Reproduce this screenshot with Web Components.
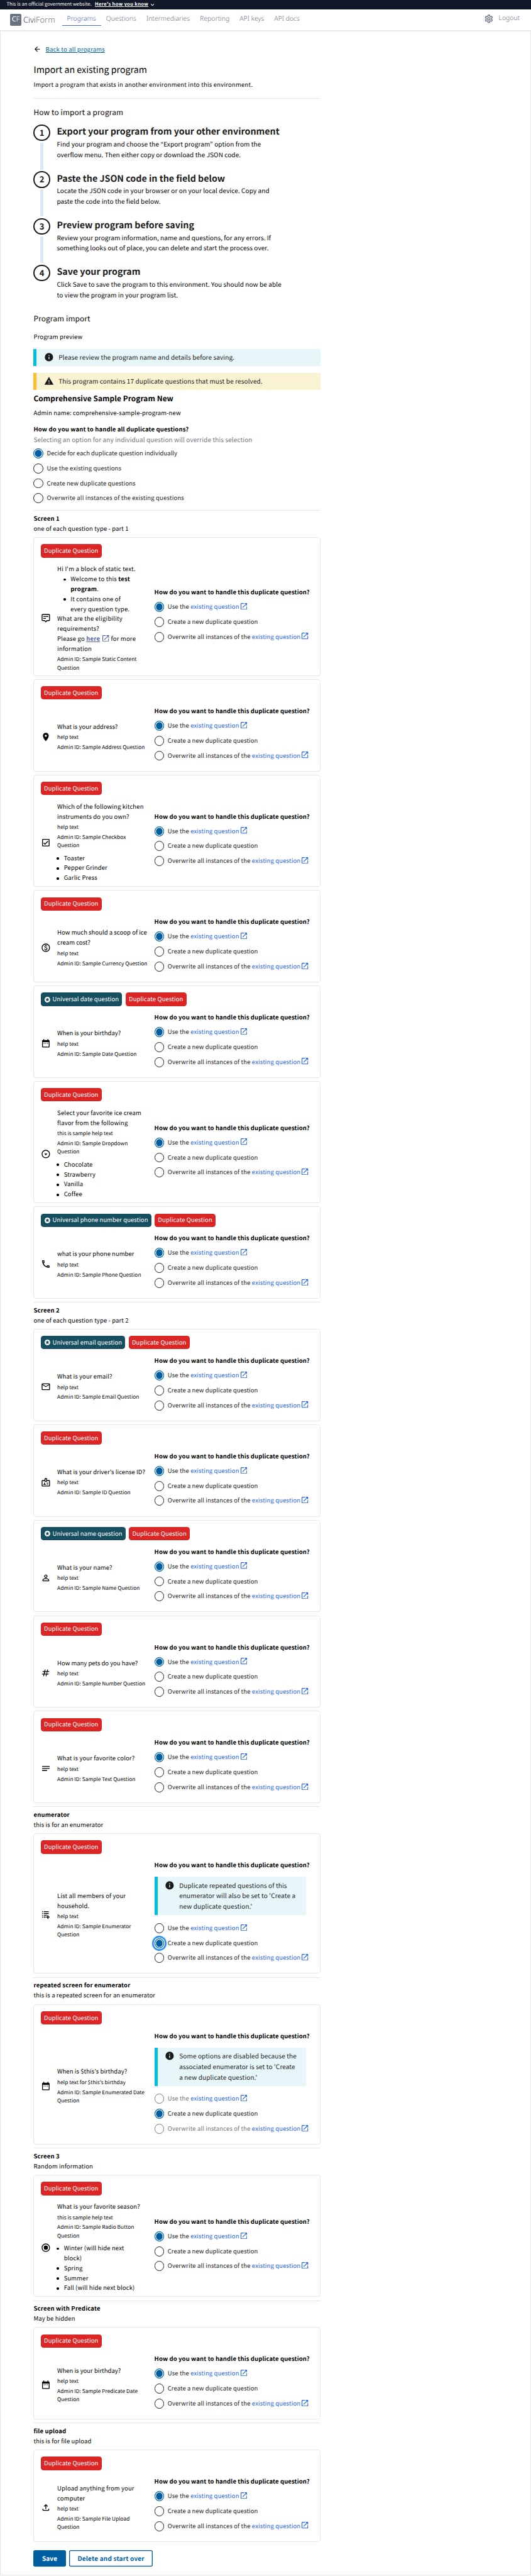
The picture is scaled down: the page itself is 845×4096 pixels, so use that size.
<!DOCTYPE html>
<html lang="en">
<head>
<meta charset="utf-8">
<title>Import an existing program</title>
<style>
html,body{margin:0;padding:0;background:#fff}
body{overflow:hidden;height:4096px}
import-page{zoom:.6602;width:1279.8px;text-rendering:geometricPrecision;font-family:"Noto Sans CJK JP","Noto Sans",sans-serif;font-size:14.45px;line-height:24px;letter-spacing:.19px;color:#000}
</style>
</head>
<body>
<import-page></import-page>
<script>
const define = (name, html, setup) => {
  const tpl = document.createElement('template');
  tpl.innerHTML = html;
  customElements.define(name, class extends HTMLElement {
    connectedCallback() {
      if (this.shadowRoot) return;
      const root = this.attachShadow({ mode: 'open' });
      // Queued before the children connect, so a parent configures them first.
      if (setup) queueMicrotask(() => setup(this, root));
      root.append(tpl.content.cloneNode(true));
    }
  });
};

const ICONS = {
  open: '<path d="M19 19H5V5h7V3H5a2 2 0 0 0-2 2v14a2 2 0 0 0 2 2h14c1.1 0 2-.9 2-2v-7h-2v7zM14 3v2h3.59l-9.83 9.83 1.41 1.41L19 6.41V10h2V3h-7z"/>',
  back: '<path d="M20 11H7.83l5.59-5.59L12 4l-8 8 8 8 1.41-1.41L7.83 13H20v-2z"/>',
  info: '<path d="M12 2a10 10 0 1 0 0 20 10 10 0 0 0 0-20zm1 15h-2v-6h2v6zm0-8h-2V7h2v2z"/>',
  warning: '<path d="M1 21h22L12 2 1 21zm12-3h-2v-2h2v2zm0-4h-2v-4h2v4z"/>',
  gear: '<path d="M19.43 12.98c.04-.32.07-.64.07-.98 0-.34-.03-.66-.07-.98l2.11-1.65c.19-.15.24-.42.12-.64l-2-3.46a.5.5 0 0 0-.61-.22l-2.49 1c-.52-.4-1.08-.73-1.69-.98l-.38-2.65A.488.488 0 0 0 14 2h-4c-.25 0-.46.18-.49.42l-.38 2.65c-.61.25-1.17.59-1.69.98l-2.49-1a.566.566 0 0 0-.18-.03c-.17 0-.34.09-.43.25l-2 3.46c-.13.22-.07.49.12.64l2.11 1.65c-.04.32-.07.65-.07.98 0 .33.03.66.07.98l-2.11 1.65c-.19.15-.24.42-.12.64l2 3.46a.5.5 0 0 0 .61.22l2.49-1c.52.4 1.08.73 1.69.98l.38 2.65c.03.24.24.42.49.42h4c.25 0 .46-.18.49-.42l.38-2.65c.61-.25 1.17-.59 1.69-.98l2.49 1c.06.02.12.03.18.03.17 0 .34-.09.43-.25l2-3.46c.12-.22.07-.49-.12-.64l-2.11-1.65zm-1.98-1.71c.04.31.05.52.05.73 0 .21-.02.43-.05.73l-.14 1.13.89.7 1.08.84-.7 1.21-1.27-.51-1.04-.42-.9.68c-.43.32-.84.56-1.25.73l-1.06.43-.16 1.13-.2 1.35h-1.4l-.19-1.35-.16-1.13-1.06-.43c-.43-.18-.83-.41-1.23-.71l-.91-.7-1.06.43-1.27.51-.7-1.21 1.08-.84.89-.7-.14-1.13c-.03-.31-.05-.54-.05-.74s.02-.43.05-.73l.14-1.13-.89-.7-1.08-.84.7-1.21 1.27.51 1.04.42.9-.68c.43-.32.84-.56 1.25-.73l1.06-.43.16-1.13.2-1.35h1.39l.19 1.35.16 1.13 1.06.43c.43.18.83.41 1.23.71l.91.7 1.06-.43 1.27-.51.7 1.21-1.07.85-.89.7.14 1.13z"/><circle cx="12" cy="12" r="3" fill="none" stroke="currentColor" stroke-width="2"/>',
  chevron: '<path d="M6 9l6 6 6-6" fill="none" stroke="currentColor" stroke-width="2.6"/>',
  static: '<path d="M4.5 3h15A1.5 1.5 0 0 1 21 4.5v11.8a1.5 1.5 0 0 1-1.5 1.5H15l-3 3-3-3H4.5A1.5 1.5 0 0 1 3 16.3V4.5A1.5 1.5 0 0 1 4.5 3z" fill="none" stroke="currentColor" stroke-width="2"/><path d="M5.8 7.2h12.4v2H5.8zM5.8 11.6h6.4v2H5.8z"/>',
  place: '<path d="M12 2C8.13 2 5 5.13 5 9c0 5.25 7 13 7 13s7-7.75 7-13c0-3.87-3.13-7-7-7zm0 9.5a2.5 2.5 0 0 1 0-5 2.5 2.5 0 0 1 0 5z"/>',
  check: '<path d="M19 3H5c-1.1 0-2 .9-2 2v14c0 1.1.9 2 2 2h14c1.1 0 2-.9 2-2V5c0-1.1-.9-2-2-2zm0 16H5V5h14v14zM17.99 9l-1.41-1.42-6.59 6.59-2.58-2.57-1.42 1.41 4 3.99z"/>',
  paid: '<path d="M12 2C6.48 2 2 6.48 2 12s4.48 10 10 10 10-4.48 10-10S17.52 2 12 2zm0 18c-4.41 0-8-3.59-8-8s3.59-8 8-8 8 3.59 8 8-3.59 8-8 8zm.89-8.9c-1.78-.59-2.64-.96-2.64-1.9 0-1.02 1.11-1.39 1.81-1.39 1.31 0 1.79.99 1.9 1.34l1.58-.67c-.15-.44-.82-1.91-2.66-2.23V5h-1.75v1.26c-2.6.56-2.62 2.85-2.62 2.96 0 2.27 2.25 2.91 3.35 3.31 1.58.56 2.28 1.07 2.28 2.03 0 1.13-1.05 1.61-1.98 1.61-1.82 0-2.34-1.87-2.4-2.09l-1.66.67c.63 2.19 2.28 2.78 3.02 2.96V19h1.75v-1.24c.52-.09 3.02-.59 3.02-3.22.01-1.39-.6-2.61-3-3.44z"/>',
  date: '<path d="M7 11h2v2H7zM11 11h2v2h-2zM15 11h2v2h-2z"/><path d="M19 4h-1V2h-2v2H8V2H6v2H5c-1.11 0-1.99.9-1.99 2L3 20a2 2 0 0 0 2 2h14c1.1 0 2-.9 2-2V6c0-1.1-.9-2-2-2zm0 16H5V9h14v11z"/>',
  star: '<path d="M11.99 2C6.47 2 2 6.48 2 12s4.47 10 9.99 10C17.52 22 22 17.52 22 12S17.52 2 11.99 2zm4.24 16L12 15.45 7.77 18l1.12-4.81-3.73-3.23 4.92-.42L12 5l1.92 4.53 4.92.42-3.73 3.23L16.23 18z"/>',
  dropdown: '<path d="M12 4c4.41 0 8 3.59 8 8s-3.59 8-8 8-8-3.59-8-8 3.59-8 8-8m0-2C6.48 2 2 6.48 2 12s4.48 10 10 10 10-4.48 10-10S17.52 2 12 2zm0 13l-4-4h8z"/>',
  phone: '<path d="M6.54 5c.06.89.21 1.76.45 2.59l-1.2 1.2c-.41-1.2-.67-2.47-.76-3.79h1.51m9.86 12.02c.85.24 1.72.39 2.6.45v1.49c-1.32-.09-2.59-.35-3.8-.75l1.2-1.19M7.5 3H4c-.55 0-1 .45-1 1 0 9.39 7.61 17 17 17 .55 0 1-.45 1-1v-3.49c0-.55-.45-1-1-1-1.24 0-2.45-.2-3.57-.57a.84.84 0 0 0-.31-.05c-.26 0-.51.1-.71.29l-2.2 2.2a15.149 15.149 0 0 1-6.59-6.59l2.2-2.2c.28-.28.36-.67.25-1.02A11.36 11.36 0 0 1 8.5 4c0-.55-.45-1-1-1z"/>',
  email: '<path d="M22 6c0-1.1-.9-2-2-2H4c-1.1 0-2 .9-2 2v12c0 1.1.9 2 2 2h16c1.1 0 2-.9 2-2V6zm-2 0l-8 5-8-5h16zm0 12H4V8l8 5 8-5v10z"/>',
  id: '<path d="M20 7h-5V4c0-1.1-.9-2-2-2h-2c-1.1 0-2 .9-2 2v3H4c-1.1 0-2 .9-2 2v11c0 1.1.9 2 2 2h16c1.1 0 2-.9 2-2V9c0-1.1-.9-2-2-2zm-9-3h2v5h-2V4zm9 16H4V9h5c0 1.1.9 2 2 2h2c1.1 0 2-.9 2-2h5v11z"/><circle cx="9" cy="14.5" r="1.5"/><path d="M11.08 16.18a5.3 5.3 0 0 0-4.16 0c-.56.24-.92.78-.92 1.39V18h6v-.43c0-.61-.36-1.15-.92-1.39zM14 13h4v1.5h-4zM14 16h4v1.5h-4z"/>',
  person: '<path d="M12 5.9a2.1 2.1 0 1 1 0 4.2 2.1 2.1 0 0 1 0-4.2m0 9c2.97 0 6.1 1.46 6.1 2.1v1.1H5.9V17c0-.64 3.13-2.1 6.1-2.1M12 4C9.79 4 8 5.79 8 8s1.79 4 4 4 4-1.79 4-4-1.79-4-4-4zm0 9c-2.67 0-8 1.34-8 4v3h16v-3c0-2.66-5.33-4-8-4z"/>',
  number: '<path d="M20 10l.5-2h-4l1-4h-2l-1 4h-4l1-4h-2l-1 4h-4L4 10h4l-1 4H3l-.5 2h4l-1 4h2l1-4h4l-1 4h2l1-4h4l.5-2h-4l1-4h4zm-6.5 4h-4l1-4h4l-1 4z"/>',
  text: '<path d="M3 18h12v-2H3v2zM3 6v2h18V6H3zm0 7h18v-2H3v2z"/>',
  enumerator: '<path d="M3 3h2v2H3zM3 7.3h2v2H3zM3 11.6h2v2H3zM3 16h2v2H3zM7 3h12v2H7zM7 7.3h12v2H7zM7 11.6h7.5v2H7zM7 16h4.5v2H7zM16 12.5h2.2v3.4H21V18h-2.8v3.4H16V18h-3.3v-2.1H16z"/>',
  radio: '<path d="M12 7a5 5 0 1 0 0 10 5 5 0 0 0 0-10zm0-5C6.48 2 2 6.48 2 12s4.48 10 10 10 10-4.48 10-10S17.52 2 12 2zm0 18c-4.42 0-8-3.58-8-8s3.58-8 8-8 8 3.58 8 8-3.58 8-8 8z"/>',
  upload: '<path d="M18 15v3H6v-3H4v3c0 1.1.9 2 2 2h12c1.1 0 2-.9 2-2v-3h-2zM7 9l1.41 1.41L11 7.83V16h2V7.83l2.59 2.58L17 9l-5-5-5 5z"/>'
};

define('cf-icon', `<style>:host{display:inline-block;flex:none;width:24px;height:24px}svg{display:block;width:100%;height:100%;fill:currentColor}</style><svg viewBox="0 0 24 24"></svg>`,
  (el, root) => {
    const svg = root.querySelector('svg');
    svg.innerHTML = ICONS[el.getAttribute('name')];
    if (el.hasAttribute('tight')) svg.setAttribute('viewBox', '3 3 18 18');
  });

define('gov-banner', `<style>
:host{display:flex;align-items:center;height:22px;padding:0 16px;background:#111827;color:#fff;font-size:11.52px;line-height:22px;letter-spacing:.02px}
b{margin-left:8px;text-decoration:underline;text-underline-offset:2px;letter-spacing:.42px}
cf-icon{width:14px;height:14px;margin-left:3px}
</style><span>This is an official government website.</span><b>Here's how you know</b><cf-icon name="chevron"></cf-icon>`);

define('nav-tab', `<style>
:host{display:block;box-sizing:border-box;height:27px;padding:0 12.2px;line-height:24px;border-bottom:2.6px solid transparent}
:host([active]){color:#4565b5;border-color:#4c6cbd}
</style><slot></slot>`);

define('site-header', `<style>
:host{display:flex;align-items:flex-start;box-sizing:border-box;height:52px;padding:12px 27px 0 24px;border-bottom:1px solid #e5e7eb;box-shadow:0 1px 2px rgba(0,0,0,.07);font-family:"Noto Sans",sans-serif;font-weight:300;font-size:15.75px;letter-spacing:0;color:#6b7280}
.mark{width:28px;height:28px;border-radius:3px;background:#6b7280;color:#fff;text-align:center;font-size:17px;line-height:27px}
.mark i{font-style:normal;font-weight:400}
.name{margin:-1px 16.8px 0 4px;font-size:19.5px;line-height:28px;width:76.5px;white-space:nowrap}
.name i{font-style:normal;color:#374151}
nav{display:flex;margin-top:.5px;letter-spacing:.03px}
.end{margin-left:auto;display:flex;align-items:center;gap:12px;height:22px}
</style><div class="mark"><i>C</i>F</div><div class="name"><i>Civi</i>Form</div>
<nav><nav-tab active>Programs</nav-tab><nav-tab>Questions</nav-tab><nav-tab>Intermediaries</nav-tab><nav-tab>Reporting</nav-tab><nav-tab>API keys</nav-tab><nav-tab>API docs</nav-tab></nav>
<div class="end"><cf-icon name="gear"></cf-icon><span>Logout</span></div>`);

define('process-step', `<style>
:host{display:grid;grid-template-columns:40px 1fr;column-gap:16px;height:112.6px;color:#1b1b1b}
.rail{display:flex;flex-direction:column;align-items:center}
.num{box-sizing:border-box;width:40px;height:40px;border:4px solid #1b1b1b;border-radius:50%;text-align:center;font-weight:700;font-size:20px;line-height:34px}
.line{width:8px;height:64.6px;margin-top:4px;background:#d9e8f6}
:host([last]) .line{display:none}
h3{margin:3.6px 0 0;font-size:21.6px;line-height:28px;letter-spacing:0}
p{margin:3.2px 0 0;font-size:15.26px;line-height:25.44px;letter-spacing:.08px;color:#000}
</style><div class="rail"><div class="num"></div><div class="line"></div></div><div><h3></h3><p><slot></slot></p></div>`,
  (el, root) => {
    root.querySelector('.num').textContent = el.getAttribute('n');
    root.querySelector('h3').textContent = el.getAttribute('heading');
  });

define('cf-alert', `<style>
:host{display:flex;box-sizing:border-box;padding:8px 10px 8px 18px;border-left:8px solid #00bde3;background:#e7f6f8;color:#1b1b1b;font-size:15.26px;line-height:25.4px;letter-spacing:.13px}
:host([type=warning]){border-color:#ffbe2e;background:#faf3d1}
cf-icon{margin:0 10.5px 0 0}
</style><cf-icon></cf-icon><div><slot></slot></div>`,
  (el, root) => root.querySelector('cf-icon').setAttribute('name', el.getAttribute('type') || 'info'));

define('cf-radio', `<style>
:host{display:flex;align-items:center;height:36px;color:#1b1b1b;white-space:nowrap}
.dot{box-sizing:border-box;flex:none;width:24px;height:24px;margin-right:8px;border:2px solid #1b1b1b;border-radius:50%;background:#fff}
:host([checked]) .dot{border-color:#005ea2;background:#005ea2;box-shadow:inset 0 0 0 2px #fff}
:host([focused]) .dot{box-shadow:inset 0 0 0 2px #fff,0 0 0 2px #fff,0 0 0 6px #2491ff}
:host([disabled]){color:#757575}
:host([disabled]) .dot{border-color:#757575}
</style><span class="dot"></span><span><slot></slot></span>`);

define('ext-link', `<style>
:host{color:#2563eb}
cf-icon{width:15.6px;height:15.6px;margin-left:3px;vertical-align:-1.5px}
</style><slot></slot><cf-icon name="open" tight></cf-icon>`);

define('cf-badge', `<style>
:host{display:flex;align-items:center;height:32px;padding:0 8px;border-radius:6.5px;background:#dc2626;color:#fff;white-space:nowrap;letter-spacing:.17px}
:host([universal]){background:#174f61;letter-spacing:.06px}
cf-icon{width:16.5px;height:16.5px;margin-right:4px;display:none}
:host([universal]) cf-icon{display:block}
</style><cf-icon name="star"></cf-icon><slot></slot>`);

define('duplicate-options', `<style>
:host{display:block;width:390px}
h4{margin:0 0 5px;font-size:14.45px;line-height:24px;letter-spacing:.17px;white-space:nowrap}
cf-alert{width:365px;margin:15.8px 0 13.3px;white-space:nowrap}
.create{letter-spacing:.09px}
.rest{height:11px}
</style><h4>How do you want to handle this duplicate question?</h4><div class="note"></div>
<cf-radio>Use the <ext-link>existing question</ext-link></cf-radio>
<cf-radio class="create">Create a new duplicate question</cf-radio>
<cf-radio>Overwrite all instances of the <ext-link>existing question</ext-link></cf-radio><div class="rest"></div>`,
  (el, root) => {
    const radios = root.querySelectorAll('cf-radio');
    const mode = el.getAttribute('mode');
    radios[mode ? 1 : 0].setAttribute('checked', '');
    if (mode === 'focus') radios[1].setAttribute('focused', '');
    if (mode === 'locked') { radios[0].setAttribute('disabled', ''); radios[2].setAttribute('disabled', ''); }
    if (el.getAttribute('note')) {
      root.querySelector('h4').style.marginBottom = 0;
      root.querySelector('.note').innerHTML = '<cf-alert>' + el.getAttribute('note') + '</cf-alert>';
    }
  });

define('question-card', `<style>
:host{display:block;box-sizing:border-box;margin-bottom:8px;padding:15.485px 15.485px 7.485px;border:1px solid #e5e7eb;border-radius:6px}
.badges{display:flex;gap:8px;height:32px}
.body{display:grid;grid-template-columns:24px 218px 1fr;column-gap:16px;align-items:center;padding-top:16px;min-height:148px}
.text{white-space:nowrap;letter-spacing:var(--track,.19px)}
.small{font-size:12.64px;line-height:20px;margin-top:4px;letter-spacing:.02px}
slot[name]{letter-spacing:.19px}
</style><div class="badges"></div><div class="body"><cf-icon></cf-icon>
<div class="text"><slot></slot><div class="small help"></div><div class="small admin"></div><slot name="options"></slot></div>
<duplicate-options></duplicate-options></div>`,
  (el, root) => {
    const uni = el.getAttribute('universal');
    root.querySelector('.badges').innerHTML = (uni ? '<cf-badge universal>Universal ' + uni + ' question</cf-badge>' : '') + '<cf-badge>Duplicate Question</cf-badge>';
    root.querySelector('cf-icon').setAttribute('name', el.getAttribute('icon'));
    const help = root.querySelector('.help');
    const helpText = el.getAttribute('help') ?? 'help text';
    if (helpText) help.textContent = helpText; else help.remove();
    root.querySelector('.admin').innerHTML = 'Admin ID: Sample ' + el.getAttribute('admin').replace('|', '<br>');
    const options = root.querySelector('duplicate-options');
    for (const key of ['mode', 'note']) if (el.getAttribute(key)) options.setAttribute(key, el.getAttribute(key));
  });

define('bullet-list', `<style>
:host{display:block;margin-top:8px;--indent:16px}
:host([nested]){margin-top:0;--indent:32px}
ul{margin:0;padding:0 0 0 var(--indent);list-style:none}
li{position:relative}
li::before{content:"";position:absolute;left:-17px;top:10px;width:5.5px;height:5.5px;border-radius:50%;background:#000}
</style><ul></ul>`,
  (el, root) => {
    root.querySelector('ul').innerHTML = [...el.querySelectorAll('li')].map(li => '<li>' + li.innerHTML + '</li>').join('');
  });

define('screen-block', `<style>
:host{display:block;border-top:1px solid #e5e7eb;padding-top:6.985px}
h3,p{margin:0;font-size:14.45px;line-height:24.2px}
h3{letter-spacing:.28px}
p{margin-bottom:8.1px;letter-spacing:.17px}
</style><h3></h3><p></p><slot></slot>`,
  (el, root) => {
    root.querySelector('h3').textContent = el.getAttribute('heading');
    root.querySelector('p').textContent = el.getAttribute('sub');
  });

define('cf-button', `<style>
:host{display:block;box-sizing:border-box;height:39px;padding:0 20.5px;border-radius:4px;background:#005ea2;color:#fff;font-weight:700;font-size:15.26px;line-height:38.5px;letter-spacing:.1px}
:host([outline]){background:#fff;color:#005ea2;box-shadow:inset 0 0 0 2px #005ea2;letter-spacing:.25px}
</style><slot></slot>`);

define('static-link', `<style>
:host{color:#5566ad}
b{text-decoration:underline;text-underline-offset:2px}
cf-icon{width:15.6px;height:15.6px;margin:0 1px 0 6px;vertical-align:-1.5px}
</style><b><slot></slot></b><cf-icon name="open" tight></cf-icon>`);

define('import-page', `<style>
:host{display:block}
main{box-sizing:border-box;height:6128px;border:1px solid #e5e7eb;border-top:0;padding:34px 505.3px 0 79.5px}
.back{display:flex;align-items:center;height:24px}
.back cf-icon{width:19px;height:19px;margin:-2px 10px 0 0}
.back a{color:#005ea2;text-decoration:underline;text-underline-offset:2px;letter-spacing:.27px}
h1,h2,h3,h4,p{margin:0;font-weight:400}
h1{margin-top:20px;font-size:21.6px;line-height:32px;letter-spacing:0}
.lead{margin-top:9px;letter-spacing:.32px}
hr{height:1px;margin:20px 0 19.5px;border:0;background:#e5e7eb}
h2{font-size:18px;line-height:28px;letter-spacing:.19px}
.steps{margin-top:14.5px}
.steps+h2{margin-top:4.8px}
.preview{margin-top:16.6px}
cf-alert{margin-top:16.3px}
.title{margin-top:7px;font-size:18px;font-weight:700;line-height:28px;letter-spacing:.09px}
.admin{margin-top:9px}
.ask{margin-top:16px;font-weight:700;font-size:14.45px;line-height:23px;letter-spacing:.2px}
.hint{color:#71767a;font-size:15.26px;letter-spacing:.11px}
.all{margin:4px 0 11px}
.actions{display:flex;gap:8px;margin-top:20.8px}
</style>
<gov-banner></gov-banner><site-header></site-header>
<main>
<div class="back"><cf-icon name="back"></cf-icon><a>Back to all programs</a></div>
<h1>Import an existing program</h1>
<p class="lead">Import a program that exists in another environment into this environment.</p>
<hr>
<h2>How to import a program</h2>
<div class="steps">
<process-step n="1" heading="Export your program from your other environment">Find your program and choose the “Export program” option from the<br>overflow menu. Then either copy or download the JSON code.</process-step>
<process-step n="2" heading="Paste the JSON code in the field below">Locate the JSON code in your browser or on your local device. Copy and<br>paste the code into the field below.</process-step>
<process-step n="3" heading="Preview program before saving">Review your program information, name and questions, for any errors. If<br>something looks out of place, you can delete and start the process over.</process-step>
<process-step n="4" last heading="Save your program">Click Save to save the program to this environment. You should now be able<br>to view the program in your program list.</process-step>
</div>
<h2>Program import</h2>
<p class="preview">Program preview</p>
<cf-alert>Please review the program name and details before saving.</cf-alert>
<cf-alert type="warning">This program contains 17 duplicate questions that must be resolved.</cf-alert>
<h3 class="title">Comprehensive Sample Program New</h3>
<p class="admin">Admin name: comprehensive-sample-program-new</p>
<h4 class="ask">How do you want to handle all duplicate questions?</h4>
<p class="hint">Selecting an option for any individual question will override this selection</p>
<div class="all">
<cf-radio checked style="letter-spacing:.01px">Decide for each duplicate question individually</cf-radio>
<cf-radio>Use the existing questions</cf-radio>
<cf-radio style="letter-spacing:.11px">Create new duplicate questions</cf-radio>
<cf-radio style="letter-spacing:.26px">Overwrite all instances of the existing questions</cf-radio>
</div>
<screen-block heading="Screen 1" sub="one of each question type - part 1">
<question-card icon="static" help="" admin="Static Content|Question" style="--track:.3px">Hi I'm a block of static text.<bullet-list nested><li>Welcome to this <b>test<br>program</b>.</li><li>It contains one of<br>every question type.</li></bullet-list>What are the eligibility<br>requirements?<br>Please go <static-link>here</static-link> for more<br>information</question-card>
<question-card icon="place" admin="Address Question" style="--track:.02px">What is your address?</question-card>
<question-card icon="check" admin="Checkbox|Question">Which of the following kitchen<br>instruments do you own?<bullet-list slot="options"><li>Toaster</li><li>Pepper Grinder</li><li>Garlic Press</li></bullet-list></question-card>
<question-card icon="paid" admin="Currency Question" style="--track:.04px">How much should a scoop of ice<br>cream cost?</question-card>
<question-card icon="date" universal="date" admin="Date Question" style="--track:0px">When is your birthday?</question-card>
<question-card icon="dropdown" help="this is sample help text" admin="Dropdown|Question">Select your favorite ice cream<br>flavor from the following<bullet-list slot="options"><li>Chocolate</li><li>Strawberry</li><li>Vanilla</li><li>Coffee</li></bullet-list></question-card>
<question-card icon="phone" universal="phone number" admin="Phone Question" style="--track:.04px">what is your phone number</question-card>
</screen-block>
<screen-block heading="Screen 2" sub="one of each question type - part 2">
<question-card icon="email" universal="email" admin="Email Question" style="--track:.13px">What is your email?</question-card>
<question-card icon="id" admin="ID Question" style="--track:.07px">What is your driver's license ID?</question-card>
<question-card icon="person" universal="name" admin="Name Question" style="--track:.1px">What is your name?</question-card>
<question-card icon="number" admin="Number Question" style="--track:-.03px">How many pets do you have?</question-card>
<question-card icon="text" admin="Text Question">What is your favorite color?</question-card>
</screen-block>
<screen-block heading="enumerator" sub="this is for an enumerator">
<question-card icon="enumerator" admin="Enumerator|Question" mode="focus" note="Duplicate repeated questions of this<br>enumerator will also be set to 'Create a<br>new duplicate question.'">List all members of your<br>household.</question-card>
</screen-block>
<screen-block heading="repeated screen for enumerator" sub="this is a repeated screen for an enumerator">
<question-card icon="date" help="help text for $this's birthday" admin="Enumerated Date|Question" mode="locked" note="Some options are disabled because the<br>associated enumerator is set to 'Create<br>a new duplicate question.'" style="--track:.1px">When is $this's birthday?</question-card>
</screen-block>
<screen-block heading="Screen 3" sub="Random information">
<question-card icon="radio" help="this is sample help text" admin="Radio Button|Question">What is your favorite season?<bullet-list slot="options"><li>Winter (will hide next<br>block)</li><li>Spring</li><li>Summer</li><li>Fall (will hide next block)</li></bullet-list></question-card>
</screen-block>
<screen-block heading="Screen with Predicate" sub="May be hidden">
<question-card icon="date" admin="Predicate Date|Question" style="--track:0px">When is your birthday?</question-card>
</screen-block>
<screen-block heading="file upload" sub="this is for file upload">
<question-card icon="upload" admin="File Upload|Question">Upload anything from your<br>computer</question-card>
</screen-block>
<div class="actions"><cf-button>Save</cf-button><cf-button outline>Delete and start over</cf-button></div>
</main>`);
</script>
</body>
</html>
